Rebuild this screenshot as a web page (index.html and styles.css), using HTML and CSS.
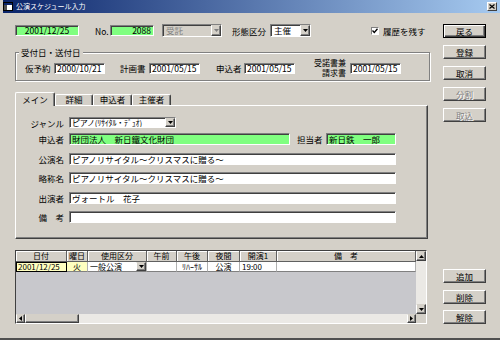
FILE: index.html
```html
<!DOCTYPE html>
<html lang="ja">
<head>
  <meta charset="UTF-8">
  <title>公演スケジュール入力</title>
  <link rel="stylesheet" href="styles.css">
</head>
<body>

  <div class="window">
    <div class="titlebar">
      <svg class="title-icon" width="10" height="9" viewBox="0 0 10 9">
        <rect x="0.5" y="0.5" width="9" height="8" fill="#fff" stroke="#000"/>
        <rect x="1" y="1" width="8" height="2" fill="#0a246a"/>
        <rect x="1" y="3" width="3" height="5" fill="#505050"/>
      </svg>
      <span class="title-text">公演スケジュール入力</span>
      <span class="close-btn">
        <svg width="6" height="5" viewBox="0 0 6 5"><path d="M0.5 0.5 L5.5 4.5 M5.5 0.5 L0.5 4.5" stroke="#000" stroke-width="1.2"/></svg>
      </span>
    </div>

    <div class="client">
      <div class="main">

        <!-- header row -->
        <div class="top-row">
          <div class="field green date-main">2001/12/25</div>
          <span class="lbl lbl-no">No.</span>
          <div class="field green no-field">2088</div>
          <div class="combo combo-jutaku disabled">
            <span class="combo-text">受託</span>
            <span class="drop"><svg width="5" height="3" viewBox="0 0 5 3"><path d="M0 0 H5 L2.5 3 Z" fill="#808080"/></svg></span>
          </div>
          <span class="lbl lbl-keitai">形態区分</span>
          <div class="combo combo-keitai">
            <span class="combo-text">主催</span>
            <span class="drop"><svg width="5" height="3" viewBox="0 0 5 3"><path d="M0 0 H5 L2.5 3 Z" fill="#000"/></svg></span>
          </div>
          <label class="check">
            <span class="box"><svg width="6" height="6" viewBox="0 0 6 6"><path d="M0.5 2.5 L2.3 4.5 L5.5 0.8" fill="none" stroke="#000" stroke-width="1.3"/></svg></span>
            履歴を残す
          </label>
        </div>

        <!-- dates -->
        <fieldset class="group">
          <legend>受付日・送付日</legend>
          <div class="group-row">
            <span class="glbl">仮予約</span>
            <div class="field gdate">2000/10/21</div>
            <span class="glbl g2">計画書</span>
            <div class="field gdate">2001/05/15</div>
            <span class="glbl g3">申込者</span>
            <div class="field gdate g3-field">2001/05/15</div>
            <span class="glbl g4">受諾書兼<br>請求書</span>
            <div class="field gdate g4-field">2001/05/15</div>
          </div>
        </fieldset>

        <!-- tabs -->
        <div class="tabs">
          <div class="tab active">メイン</div>
          <div class="tab tab-shoho">詳細</div>
          <div class="tab">申込者</div>
          <div class="tab">主催者</div>
        </div>

        <div class="panel">
          <div class="frow frow-first">
            <span class="flabel">ジャンル</span>
            <div class="combo combo-genre">
              <span class="combo-text">ピアノ(ﾘｻｲﾀﾙ・ﾃﾞｭｵ)</span>
              <span class="drop"><svg width="5" height="3" viewBox="0 0 5 3"><path d="M0 0 H5 L2.5 3 Z" fill="#000"/></svg></span>
            </div>
          </div>
          <div class="frow frow-second">
            <span class="flabel">申込者</span>
            <div class="field green applicant">財団法人　新日鐵文化財団</div>
            <span class="lbl lbl-tanto">担当者</span>
            <div class="field green tanto">新日鉄　一郎</div>
          </div>
          <div class="frow">
            <span class="flabel">公演名</span>
            <div class="field wide">ピアノリサイタル～クリスマスに贈る～</div>
          </div>
          <div class="frow">
            <span class="flabel">略称名</span>
            <div class="field wide">ピアノリサイタル～クリスマスに贈る～</div>
          </div>
          <div class="frow">
            <span class="flabel">出演者</span>
            <div class="field wide">ヴォートル　花子</div>
          </div>
          <div class="frow">
            <span class="flabel">備　考</span>
            <div class="field wide"></div>
          </div>
        </div>

        <!-- schedule grid -->
        <div class="grid">
          <div class="grid-view">
            <div class="cells">
              <div class="gh">日付</div>
              <div class="gh">曜日</div>
              <div class="gh">使用区分</div>
              <div class="gh">午前</div>
              <div class="gh">午後</div>
              <div class="gh">夜間</div>
              <div class="gh">開演1</div>
              <div class="gh">備　考</div>

              <div class="gd cur">2001/12/25</div>
              <div class="gd yellow center">火</div>
              <div class="gd cell-combo">一般公演<span class="drop small"><svg width="5" height="3" viewBox="0 0 5 3"><path d="M0 0 H5 L2.5 3 Z" fill="#000"/></svg></span></div>
              <div class="gd"></div>
              <div class="gd center">ﾘﾊｰｻﾙ</div>
              <div class="gd center">公演</div>
              <div class="gd">19:00</div>
              <div class="gd"></div>
            </div>
          </div>
          <div class="vscroll">
            <span class="sbtn"><svg width="5" height="3" viewBox="0 0 5 3"><path d="M0 3 H5 L2.5 0 Z" fill="#000"/></svg></span>
            <span class="sbtn"><svg width="5" height="3" viewBox="0 0 5 3"><path d="M0 0 H5 L2.5 3 Z" fill="#000"/></svg></span>
          </div>
          <div class="hscroll">
            <span class="sbtn"><svg width="3" height="5" viewBox="0 0 3 5"><path d="M3 0 V5 L0 2.5 Z" fill="#000"/></svg></span>
            <span class="thumb"></span>
            <span class="sbtn sbtn-right"><svg width="3" height="5" viewBox="0 0 3 5"><path d="M0 0 V5 L3 2.5 Z" fill="#000"/></svg></span>
          </div>
          <div class="corner"></div>
        </div>
      </div>

      <div class="side">
        <div class="btn-group">
          <button class="btn default">戻る</button>
          <button class="btn">登録</button>
          <button class="btn">取消</button>
          <button class="btn" disabled>分割</button>
          <button class="btn" disabled>取込</button>
        </div>
        <div class="btn-group bottom">
          <button class="btn">追加</button>
          <button class="btn">削除</button>
          <button class="btn">解除</button>
        </div>
      </div>
    </div>
  </div>

</body>
</html>
```

FILE: styles.css
```css
* {
  box-sizing: border-box;
}

body {
  margin: 0;
  background-color: #d4d0c8;
  font-family: "Noto Sans CJK JP", "Noto Sans", sans-serif;
  font-size: 8.5px;
  color: #000;
}

.window {
  width: 500px;
  height: 340px;
  padding-left: 3px;
  background-color: #d4d0c8;
  border-bottom: 2px solid #505050;
  overflow: hidden;
}

/* title bar */
.titlebar {
  height: 13px;
  display: flex;
  align-items: center;
  padding-right: 3px;
  background: linear-gradient(to right, #0a246a, #a6caf0);
  color: white;
}

.title-text {
  margin-left: 3px;
  font-size: 7px;
  line-height: 13px;
}

.close-btn {
  margin-left: auto;
  width: 10px;
  height: 9px;
  display: flex;
  align-items: center;
  justify-content: center;
  background-color: #d4d0c8;
  border: 1px solid;
  border-color: #fff #404040 #404040 #fff;
}

/* layout */
.client {
  display: flex;
  height: 325px;
  padding: 11px 0 14px 12px;
}

.main {
  width: 415px;
  display: flex;
  flex-direction: column;
}

.side {
  width: 43px;
  margin-left: 13px;
  display: flex;
  flex-direction: column;
  justify-content: space-between;
}

/* common controls */
.lbl,
.glbl,
.flabel {
  white-space: nowrap;
}

.field {
  height: 11px;
  padding: 0 2px;
  line-height: 9px;
  background-color: #fff;
  border: 1px solid;
  border-color: #808080 #fff #fff #808080;
  box-shadow: inset 1px 1px #404040;
  white-space: nowrap;
  overflow: hidden;
}

.green {
  background-color: #80ff80;
}

.combo {
  height: 13px;
  display: flex;
  background-color: #fff;
  border: 1px solid;
  border-color: #808080 #fff #fff #808080;
  box-shadow: inset 1px 1px #404040;
}

.combo-text {
  flex: 1;
  padding-left: 3px;
  line-height: 11px;
  white-space: nowrap;
  overflow: hidden;
}

.drop {
  width: 10px;
  flex-shrink: 0;
  display: flex;
  align-items: center;
  justify-content: center;
  background-color: #d4d0c8;
  border: 1px solid;
  border-color: #d4d0c8 #404040 #404040 #fff;
  box-shadow: inset -1px -1px #808080;
}

.combo.disabled {
  background-color: #d4d0c8;
  color: #808080;
}

/* top row */
.top-row {
  height: 13px;
  display: flex;
  align-items: center;
}

.date-main {
  width: 64px;
  text-align: center;
}

.lbl-no {
  width: 15px;
  margin-left: 16px;
}

.no-field {
  width: 44px;
  text-align: right;
}

.combo-jutaku {
  width: 60px;
  margin-left: 8px;
}

.lbl-keitai {
  width: 38px;
  margin-left: 10px;
}

.combo-keitai {
  width: 41px;
}

.check {
  margin-left: 60px;
  display: flex;
  align-items: center;
  gap: 4px;
}

.box {
  width: 8px;
  height: 8px;
  display: flex;
  align-items: center;
  justify-content: center;
  background-color: #fff;
  border: 1px solid;
  border-color: #808080 #fff #fff #808080;
}

/* date group */
.group {
  width: 415px;
  min-width: 0;
  margin: 10px 0 0 0;
  padding: 2px 0 3px 0;
  border: 1px solid #808080;
  box-shadow: inset 1px 1px #fff, 1px 1px #fff;
}

.group legend {
  margin-left: 3px;
  padding: 0 2px;
  height: 10px;
  line-height: 10px;
  background-color: #d4d0c8;
}

.group-row {
  height: 18px;
  display: flex;
  align-items: center;
  padding-left: 9px;
}

.glbl {
  width: 26px;
}

.gdate {
  width: 51px;
  margin-left: 3px;
}

.g2 {
  margin-left: 15px;
}

.g3 {
  margin-left: 16px;
}

.g3-field {
  margin-left: 2px;
}

.g4 {
  width: 36px;
  margin-left: 15px;
  text-align: right;
  font-size: 8px;
  line-height: 10px;
}

.g4-field {
  margin-left: 4px;
}

/* tabs */
.tabs {
  height: 13px;
  margin-top: 11px;
  display: flex;
  align-items: flex-end;
}

.tab {
  width: 39px;
  height: 11px;
  line-height: 9px;
  text-align: center;
  border: 1px solid;
  border-color: #fff #404040 transparent #fff;
  border-bottom: none;
  box-shadow: inset -1px 0 #808080;
  border-radius: 2px 2px 0 0;
}

.tab.active {
  width: 40px;
  height: 14px;
  line-height: 12px;
  margin-bottom: -1px;
  position: relative;
  z-index: 1;
  background-color: #d4d0c8;
}

.tab-shoho {
  width: 38px;
}

.panel {
  width: 413px;
  height: 134px;
  padding-top: 11px;
  border: 1px solid;
  border-color: #fff #404040 #404040 #fff;
  box-shadow: inset -1px -1px #808080;
}

.frow {
  display: flex;
  align-items: center;
  height: 12px;
  margin-top: 7.5px;
}

.frow-first {
  margin-top: 0;
  height: 11px;
}

.frow-second {
  margin-top: 5px;
}

.frow .field {
  height: 12px;
  line-height: 10px;
}

.flabel {
  width: 48px;
  margin-right: 5px;
  text-align: right;
}

.combo-genre {
  width: 107px;
  height: 11px;
}

.combo-genre .combo-text {
  padding-left: 2px;
  font-size: 8px;
  line-height: 9px;
  letter-spacing: -0.2px;
}

.applicant {
  width: 221px;
}

.lbl-tanto {
  width: 29px;
  margin-left: 7px;
}

.tanto {
  width: 70px;
}

.wide {
  width: 327px;
}

/* grid */
.grid {
  width: 412px;
  height: 74px;
  margin-top: 11px;
  display: grid;
  grid-template-columns: 1fr 10px;
  grid-template-rows: 1fr 9px;
  background-color: #c8c8cc;
  border: 1px solid;
  border-color: #404040 #fff #fff #404040;
}

.grid-view {
  overflow: hidden;
}

.cells {
  display: grid;
  grid-template-columns: 51px 21px 59px 30px 31px 32px 37px 1fr;
  font-size: 8px;
}

.gh {
  height: 11px;
  line-height: 10px;
  text-align: center;
  background-color: #d4d0c8;
  border-right: 1px solid #606060;
  border-bottom: 1px solid #606060;
  box-shadow: inset 1px 1px #fff;
}

.gd {
  height: 10px;
  line-height: 9px;
  padding: 0 2px;
  white-space: nowrap;
  background-color: #fff;
  border-right: 1px solid #b0b0b0;
  border-bottom: 1px solid #808080;
}

.gd.center {
  text-align: center;
}

.gd.yellow {
  background-color: #ffffc0;
}

.gd.cur {
  background-color: #ffffc0;
  border: 1px solid #000;
  padding: 0 1px;
  line-height: 8px;
}

.cell-combo {
  display: flex;
  justify-content: space-between;
  padding-right: 0;
}

.drop.small {
  width: 10px;
  height: 9px;
}

.vscroll {
  display: flex;
  flex-direction: column;
  justify-content: space-between;
  background-color: #ebe9e5;
}

.hscroll {
  display: flex;
  background-color: #ebe9e5;
}

.sbtn {
  width: 10px;
  height: 10px;
  display: flex;
  align-items: center;
  justify-content: center;
  background-color: #d4d0c8;
  border: 1px solid;
  border-color: #d4d0c8 #404040 #404040 #fff;
  box-shadow: inset -1px -1px #808080;
}

.hscroll .sbtn {
  width: 9px;
  height: 9px;
}

.thumb {
  width: 54px;
  background-color: #d4d0c8;
  border: 1px solid;
  border-color: #d4d0c8 #404040 #404040 #fff;
  box-shadow: inset -1px -1px #808080;
}

.sbtn-right {
  margin-left: auto;
}

.corner {
  background-color: #d4d0c8;
}

/* side buttons */
.btn-group {
  display: flex;
  flex-direction: column;
  gap: 7px;
}

.btn-group.bottom {
  gap: 6.5px;
}

.btn {
  width: 43px;
  height: 14px;
  padding: 0;
  font: inherit;
  line-height: 12px;
  color: #000;
  background-color: #d4d0c8;
  border: 1px solid;
  border-color: #fff #404040 #404040 #fff;
  box-shadow: inset -1px -1px #808080;
}

.btn.default {
  border-color: #000;
  box-shadow: inset 1px 1px #fff, inset -1px -1px #404040, inset -2px -2px #808080;
}

.btn:disabled {
  color: #808080;
  text-shadow: 1px 1px #fff;
}
```
